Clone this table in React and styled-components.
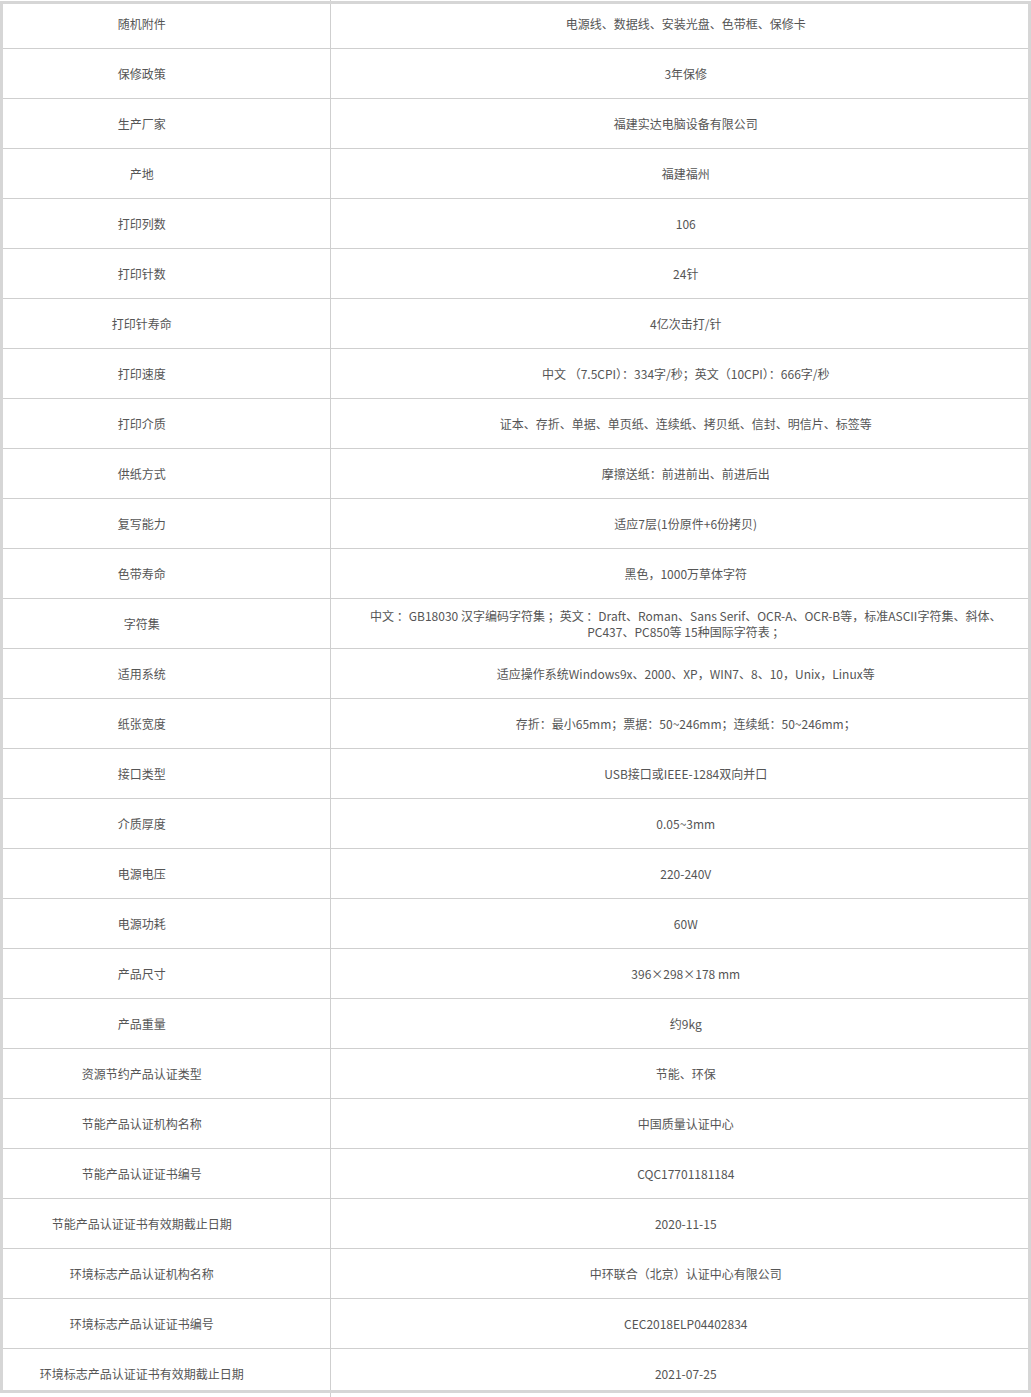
import React from 'react';
import styled, { createGlobalStyle } from 'styled-components';

const specs = [
  ['随机附件', '电源线、数据线、安装光盘、色带框、保修卡'],
  ['保修政策', '3年保修'],
  ['生产厂家', '福建实达电脑设备有限公司'],
  ['产地', '福建福州'],
  ['打印列数', '106'],
  ['打印针数', '24针'],
  ['打印针寿命', '4亿次击打/针'],
  ['打印速度', '中文 （7.5CPI）：334字/秒；英文（10CPI）：666字/秒'],
  ['打印介质', '证本、存折、单据、单页纸、连续纸、拷贝纸、信封、明信片、标签等'],
  ['供纸方式', '摩擦送纸：前进前出、前进后出'],
  ['复写能力', '适应7层(1份原件+6份拷贝)'],
  ['色带寿命', '黑色，1000万草体字符'],
  ['字符集', '中文 ：GB18030 汉字编码字符集 ；英文 ：Draft、Roman、Sans Serif、OCR-A、OCR-B等，标准ASCII字符集、斜体、PC437、PC850等 15种国际字符表 ；'],
  ['适用系统', '适应操作系统Windows9x、2000、XP，WIN7、8、10，Unix，Linux等'],
  ['纸张宽度', '存折：最小65mm；票据：50~246mm；连续纸：50~246mm；'],
  ['接口类型', 'USB接口或IEEE-1284双向并口'],
  ['介质厚度', '0.05~3mm'],
  ['电源电压', '220-240V'],
  ['电源功耗', '60W'],
  ['产品尺寸', '396×298×178 mm'],
  ['产品重量', '约9kg'],
  ['资源节约产品认证类型', '节能、环保'],
  ['节能产品认证机构名称', '中国质量认证中心'],
  ['节能产品认证证书编号', 'CQC17701181184'],
  ['节能产品认证证书有效期截止日期', '2020-11-15'],
  ['环境标志产品认证机构名称', '中环联合（北京）认证中心有限公司'],
  ['环境标志产品认证证书编号', 'CEC2018ELP04402834'],
  ['环境标志产品认证证书有效期截止日期', '2021-07-25'],
];

const GlobalStyle = createGlobalStyle`
  body {
    margin: 0;
    background: #fff;
    font-family: "Microsoft YaHei", "Noto Sans CJK SC", sans-serif;
  }
`;

const Page = styled.div`
  position: relative;
  width: 1031px;
  height: 1397px;
  overflow: hidden;
  background: #fff;
`;

const SpecTable = styled.table`
  width: 1031px;
  margin-top: -2px;
  border-collapse: collapse;
  table-layout: fixed;
  font-size: 12px;
  color: #555;
`;

const Row = styled.tr`
  height: 50px;
`;

const Cell = styled.td`
  box-sizing: border-box;
  height: 50px;
  padding: 2px 0 0;
  text-align: center;
  vertical-align: middle;
  line-height: 16px;
  border-bottom: 1px solid #cfcfcf;
`;

const Label = styled(Cell)`
  width: 330px;
  padding-right: 46px;
  border-right: 1px solid #cfcfcf;
`;

const Value = styled(Cell)`
  padding-left: 20px;
  padding-right: 10px;
`;

const Frame = styled.div`
  position: absolute;
  top: 1px;
  left: 0;
  right: 0;
  bottom: 4px;
  border: 3px solid #d6d6d6;
  pointer-events: none;
`;

export default function App() {
  return (
    <>
      <GlobalStyle />
      <Page>
        <SpecTable>
          <tbody>
            {specs.map(([k, v]) => (
              <Row key={k}>
                <Label>{k}</Label>
                <Value>{v}</Value>
              </Row>
            ))}
          </tbody>
        </SpecTable>
        <Frame />
      </Page>
    </>
  );
}
